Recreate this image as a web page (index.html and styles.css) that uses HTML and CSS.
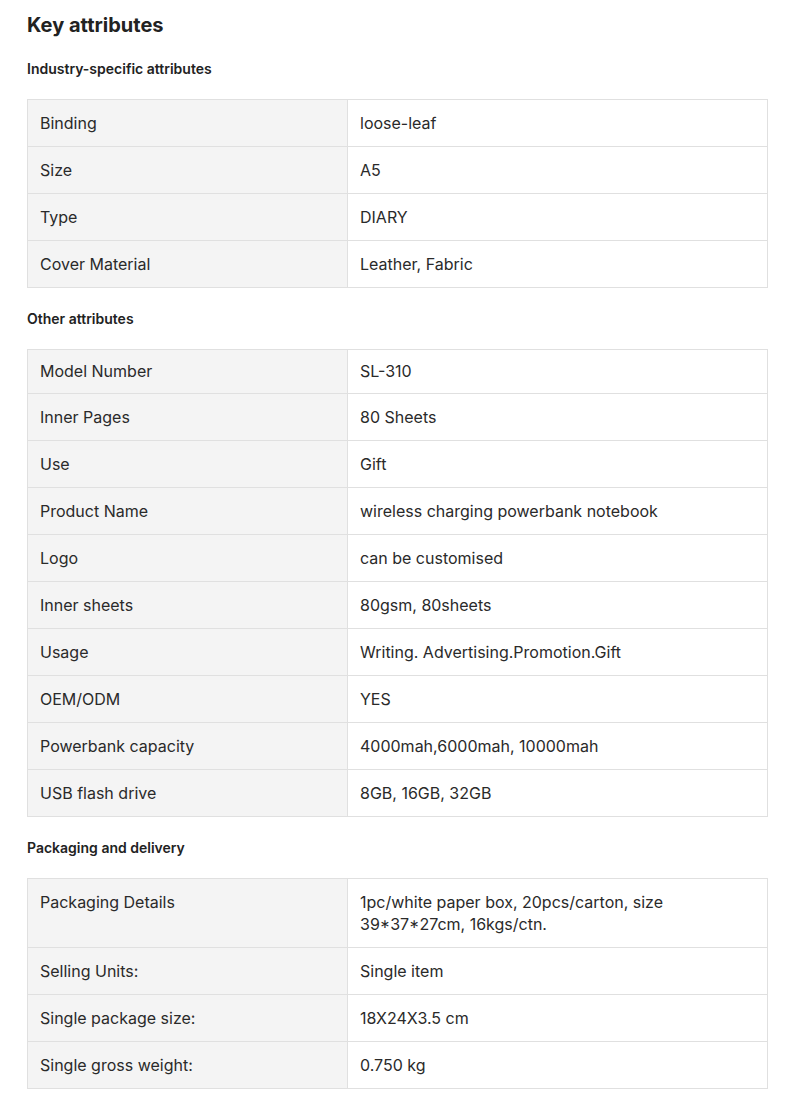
FILE: index.html
```html
<!DOCTYPE html>
<html>
  <head>
    <meta charset="UTF-8">
    <title>Key attributes</title>
    <link rel="stylesheet" href="styles.css">
  </head>
  <body>
    <div id="attributes">
      <h2 class="title">Key attributes</h2>

      <h3 class="group">Industry-specific attributes</h3>
      <table class="attrs">
        <tr><td class="name">Binding</td><td class="value">loose-leaf</td></tr>
        <tr><td class="name">Size</td><td class="value">A5</td></tr>
        <tr><td class="name">Type</td><td class="value">DIARY</td></tr>
        <tr><td class="name">Cover Material</td><td class="value">Leather, Fabric</td></tr>
      </table>

      <h3 class="group">Other attributes</h3>
      <table class="attrs">
        <tr class="short"><td class="name">Model Number</td><td class="value">SL-310</td></tr>
        <tr><td class="name">Inner Pages</td><td class="value">80 Sheets</td></tr>
        <tr><td class="name">Use</td><td class="value">Gift</td></tr>
        <tr><td class="name">Product Name</td><td class="value">wireless charging powerbank notebook</td></tr>
        <tr><td class="name">Logo</td><td class="value">can be customised</td></tr>
        <tr><td class="name">Inner sheets</td><td class="value">80gsm, 80sheets</td></tr>
        <tr><td class="name">Usage</td><td class="value">Writing. Advertising.Promotion.Gift</td></tr>
        <tr><td class="name">OEM/ODM</td><td class="value">YES</td></tr>
        <tr><td class="name">Powerbank capacity</td><td class="value">4000mah,6000mah, 10000mah</td></tr>
        <tr><td class="name">USB flash drive</td><td class="value">8GB, 16GB, 32GB</td></tr>
      </table>

      <h3 class="group">Packaging and delivery</h3>
      <table class="attrs">
        <tr><td class="name">Packaging Details</td><td class="value">1pc/white paper box, 20pcs/carton, size<br>39*37*27cm, 16kgs/ctn.</td></tr>
        <tr><td class="name">Selling Units:</td><td class="value">Single item</td></tr>
        <tr><td class="name">Single package size:</td><td class="value">18X24X3.5 cm</td></tr>
        <tr><td class="name">Single gross weight:</td><td class="value">0.750 kg</td></tr>
      </table>
    </div>
  </body>
</html>
```

FILE: styles.css
```css
body {
  margin: 0;
  background: #fff;
  font-family: Inter, "Noto Sans", sans-serif;
  color: #222;
}
#attributes {
  padding: 0 18px 0 27px;
}
.title {
  margin: 11px 0 0 0;
  font-size: 20px;
  line-height: 28px;
  font-weight: 700;
  color: #222;
}
.group {
  margin: 22px 0 21px 0;
  font-size: 14px;
  line-height: 18px;
  font-weight: 600;
  color: #222;
}
.title + .group {
  margin-top: 21px;
}
.attrs {
  width: 741px;
  border-collapse: collapse;
  font-size: 16px;
  line-height: 22px;
  color: #2a2a2a;
}
.attrs td {
  border: 1px solid #e0e0e0;
  padding: 12px 12px;
  vertical-align: top;
}
.attrs .name {
  width: 295px;
  background: #f4f4f4;
}
.attrs .value {
  background: #fff;
}
.attrs tr.short td {
  padding-top: 10px;
  padding-bottom: 11px;
}
```
